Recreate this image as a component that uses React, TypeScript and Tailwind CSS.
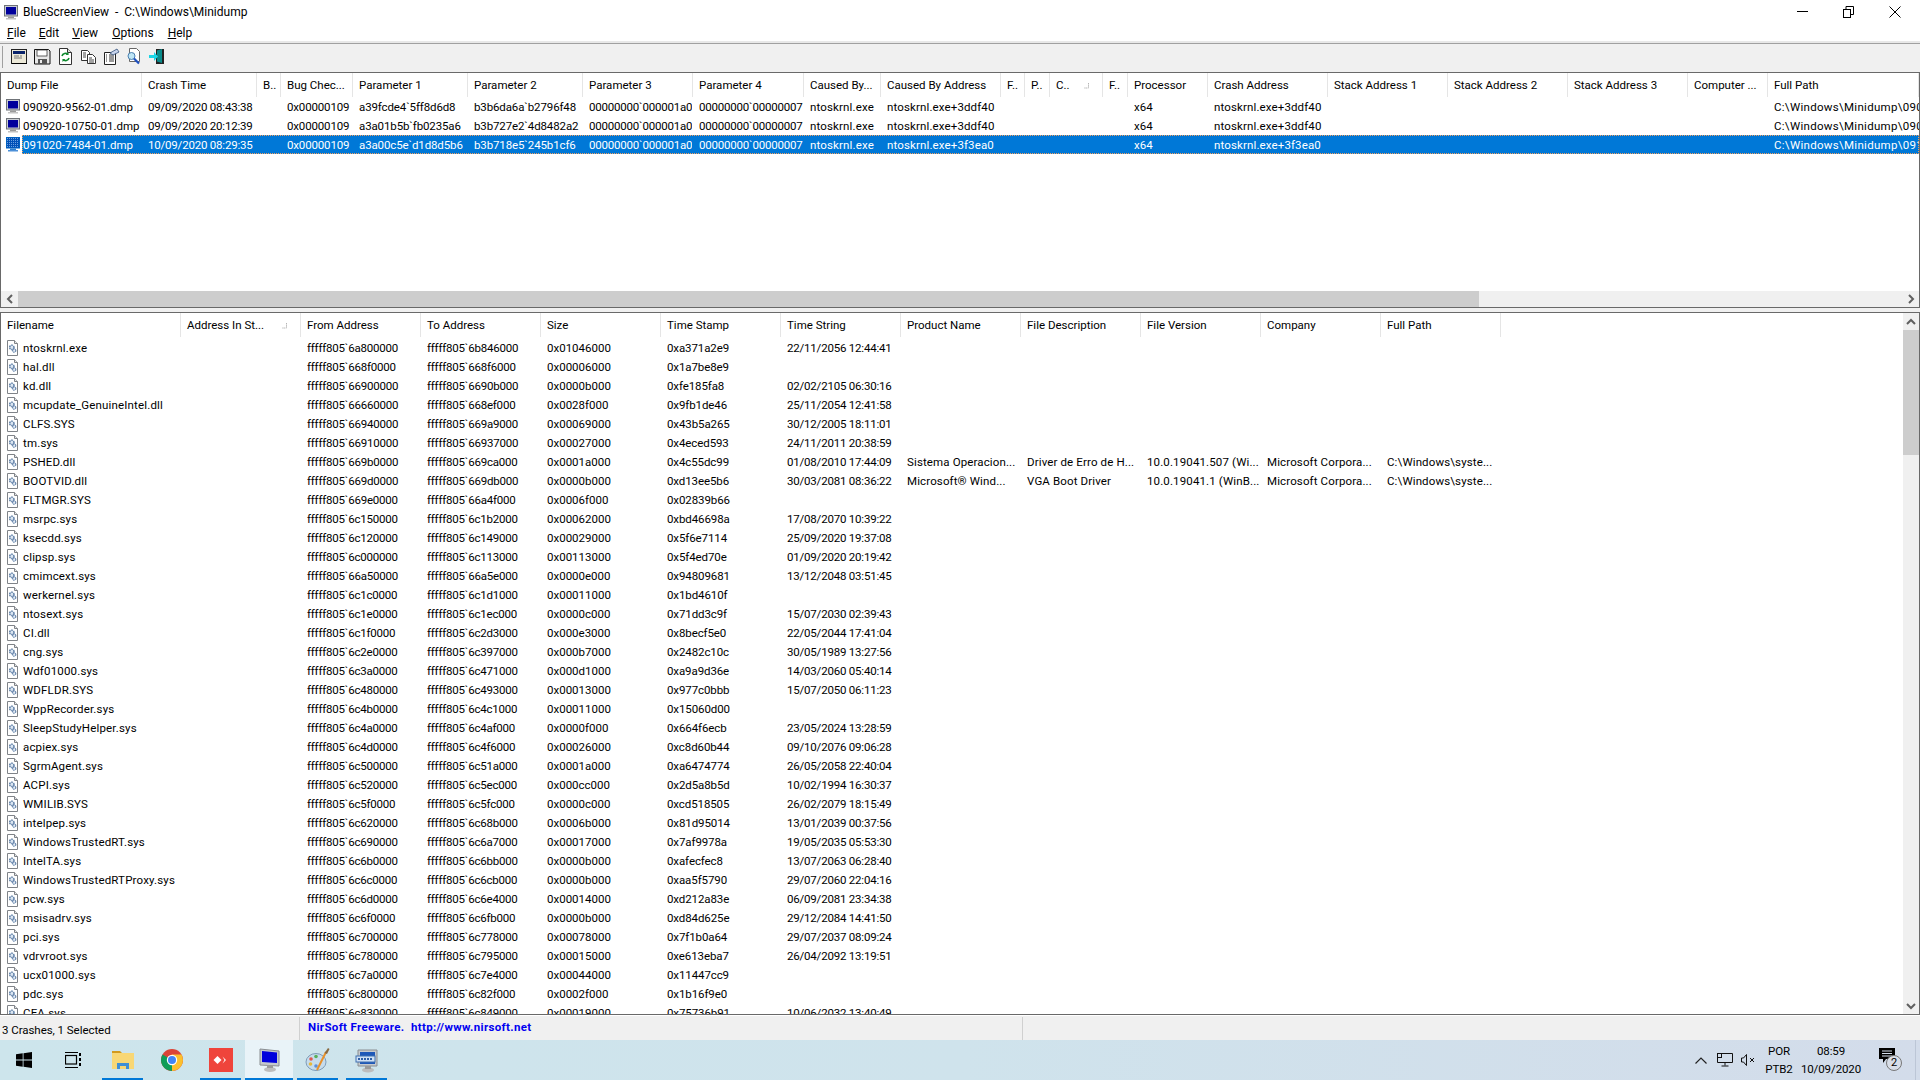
import React from 'react';

const crashes = [
  ['090920-9562-01.dmp', '09/09/2020 08:43:38', '', '0x00000109', 'a39fcde4`5ff8d6d8', 'b3b6da6a`b2796f48', '00000000`000001a0', '00000000`00000007', 'ntoskrnl.exe', 'ntoskrnl.exe+3ddf40', '', '', '', '', 'x64', 'ntoskrnl.exe+3ddf40', '', '', '', '', 'C:\\Windows\\Minidump\\090920-9562-01.dmp'],
  ['090920-10750-01.dmp', '09/09/2020 20:12:39', '', '0x00000109', 'a3a01b5b`fb0235a6', 'b3b727e2`4d8482a2', '00000000`000001a0', '00000000`00000007', 'ntoskrnl.exe', 'ntoskrnl.exe+3ddf40', '', '', '', '', 'x64', 'ntoskrnl.exe+3ddf40', '', '', '', '', 'C:\\Windows\\Minidump\\090920-10750-01.dmp'],
  ['091020-7484-01.dmp', '10/09/2020 08:29:35', '', '0x00000109', 'a3a00c5e`d1d8d5b6', 'b3b718e5`245b1cf6', '00000000`000001a0', '00000000`00000007', 'ntoskrnl.exe', 'ntoskrnl.exe+3f3ea0', '', '', '', '', 'x64', 'ntoskrnl.exe+3f3ea0', '', '', '', '', 'C:\\Windows\\Minidump\\091020-7484-01.dmp'],
];

// the reference font has narrower digits and wider letters than Roboto
const crashTracking = ['', 'tracking-[-0.2px]', '', 'tracking-[-0.15px]', 'tracking-[-0.12px]', 'tracking-[-0.12px]', 'tracking-[-0.2px]', 'tracking-[-0.2px]', 'tracking-[0.15px]', 'tracking-[0.13px]', '', '', '', '', '', 'tracking-[0.13px]', '', '', '', '', 'tracking-[0.3px]'];

const crashHeaders = ['Dump File', 'Crash Time', 'B..', 'Bug Chec...', 'Parameter 1', 'Parameter 2', 'Parameter 3', 'Parameter 4', 'Caused By...', 'Caused By Address', 'F..', 'P..', 'C..', 'F..', 'Processor', 'Crash Address', 'Stack Address 1', 'Stack Address 2', 'Stack Address 3', 'Computer ...', 'Full Path'];

const driverHeaders = ['Filename', 'Address In St...', 'From Address', 'To Address', 'Size', 'Time Stamp', 'Time String', 'Product Name', 'File Description', 'File Version', 'Company', 'Full Path'];

const sis = ['Sistema Operacion...', 'Driver de Erro de H...', '10.0.19041.507 (Wi...', 'Microsoft Corpora...', 'C:\\Windows\\syste...'];
const vga = ['Microsoft\u00ae Wind...', 'VGA Boot Driver', '10.0.19041.1 (WinB...', 'Microsoft Corpora...', 'C:\\Windows\\syste...'];

const drivers: string[][] = [
  ['ntoskrnl.exe', '6a800000', '6b846000', '01046000', '0xa371a2e9', '22/11/2056 12:44:41'],
  ['hal.dll', '668f0000', '668f6000', '00006000', '0x1a7be8e9', ''],
  ['kd.dll', '66900000', '6690b000', '0000b000', '0xfe185fa8', '02/02/2105 06:30:16'],
  ['mcupdate_GenuineIntel.dll', '66660000', '668ef000', '0028f000', '0x9fb1de46', '25/11/2054 12:41:58'],
  ['CLFS.SYS', '66940000', '669a9000', '00069000', '0x43b5a265', '30/12/2005 18:11:01'],
  ['tm.sys', '66910000', '66937000', '00027000', '0x4eced593', '24/11/2011 20:38:59'],
  ['PSHED.dll', '669b0000', '669ca000', '0001a000', '0x4c55dc99', '01/08/2010 17:44:09', ...sis],
  ['BOOTVID.dll', '669d0000', '669db000', '0000b000', '0xd13ee5b6', '30/03/2081 08:36:22', ...vga],
  ['FLTMGR.SYS', '669e0000', '66a4f000', '0006f000', '0x02839b66', ''],
  ['msrpc.sys', '6c150000', '6c1b2000', '00062000', '0xbd46698a', '17/08/2070 10:39:22'],
  ['ksecdd.sys', '6c120000', '6c149000', '00029000', '0x5f6e7114', '25/09/2020 19:37:08'],
  ['clipsp.sys', '6c000000', '6c113000', '00113000', '0x5f4ed70e', '01/09/2020 20:19:42'],
  ['cmimcext.sys', '66a50000', '66a5e000', '0000e000', '0x94809681', '13/12/2048 03:51:45'],
  ['werkernel.sys', '6c1c0000', '6c1d1000', '00011000', '0x1bd4610f', ''],
  ['ntosext.sys', '6c1e0000', '6c1ec000', '0000c000', '0x71dd3c9f', '15/07/2030 02:39:43'],
  ['CI.dll', '6c1f0000', '6c2d3000', '000e3000', '0x8becf5e0', '22/05/2044 17:41:04'],
  ['cng.sys', '6c2e0000', '6c397000', '000b7000', '0x2482c10c', '30/05/1989 13:27:56'],
  ['Wdf01000.sys', '6c3a0000', '6c471000', '000d1000', '0xa9a9d36e', '14/03/2060 05:40:14'],
  ['WDFLDR.SYS', '6c480000', '6c493000', '00013000', '0x977c0bbb', '15/07/2050 06:11:23'],
  ['WppRecorder.sys', '6c4b0000', '6c4c1000', '00011000', '0x15060d00', ''],
  ['SleepStudyHelper.sys', '6c4a0000', '6c4af000', '0000f000', '0x664f6ecb', '23/05/2024 13:28:59'],
  ['acpiex.sys', '6c4d0000', '6c4f6000', '00026000', '0xc8d60b44', '09/10/2076 09:06:28'],
  ['SgrmAgent.sys', '6c500000', '6c51a000', '0001a000', '0xa6474774', '26/05/2058 22:40:04'],
  ['ACPI.sys', '6c520000', '6c5ec000', '000cc000', '0x2d5a8b5d', '10/02/1994 16:30:37'],
  ['WMILIB.SYS', '6c5f0000', '6c5fc000', '0000c000', '0xcd518505', '26/02/2079 18:15:49'],
  ['intelpep.sys', '6c620000', '6c68b000', '0006b000', '0x81d95014', '13/01/2039 00:37:56'],
  ['WindowsTrustedRT.sys', '6c690000', '6c6a7000', '00017000', '0x7af9978a', '19/05/2035 05:53:30'],
  ['IntelTA.sys', '6c6b0000', '6c6bb000', '0000b000', '0xafecfec8', '13/07/2063 06:28:40'],
  ['WindowsTrustedRTProxy.sys', '6c6c0000', '6c6cb000', '0000b000', '0xaa5f5790', '29/07/2060 22:04:16'],
  ['pcw.sys', '6c6d0000', '6c6e4000', '00014000', '0xd212a83e', '06/09/2081 23:34:38'],
  ['msisadrv.sys', '6c6f0000', '6c6fb000', '0000b000', '0xd84d625e', '29/12/2084 14:41:50'],
  ['pci.sys', '6c700000', '6c778000', '00078000', '0x7f1b0a64', '29/07/2037 08:09:24'],
  ['vdrvroot.sys', '6c780000', '6c795000', '00015000', '0xe613eba7', '26/04/2092 13:19:51'],
  ['ucx01000.sys', '6c7a0000', '6c7e4000', '00044000', '0x11447cc9', ''],
  ['pdc.sys', '6c800000', '6c82f000', '0002f000', '0x1b16f9e0', ''],
  ['CEA.sys', '6c830000', '6c849000', '00019000', '0x75736b91', '10/06/2032 13:40:49'],
];

const crashHeadGrid = 'grid-cols-[141px_115px_24px_72px_115px_115px_110px_111px_77px_120px_24px_25px_53px_25px_80px_120px_120px_120px_120px_80px_1fr]';
const crashRowGrid = 'grid-cols-[119px_115px_24px_72px_115px_115px_110px_111px_77px_120px_24px_25px_53px_25px_80px_120px_120px_120px_120px_80px_1fr]';
const driverHeadGrid = 'grid-cols-[180px_120px_120px_120px_120px_120px_120px_120px_120px_120px_120px_120px]';
const driverRowGrid = 'grid-cols-[158px_120px_120px_120px_120px_120px_120px_120px_120px_120px_120px_120px]';

function MonitorIcon({ selected = false }: { selected?: boolean }) {
  return (
    <svg width="16" height="16" viewBox="0 0 16 16" className="shrink-0">
      <defs>
        <pattern id="sel" width="2" height="2" patternUnits="userSpaceOnUse">
          <rect width="2" height="2" fill="#0050b8" />
          <rect width="1" height="1" fill="#6aa0e0" />
        </pattern>
      </defs>
      <rect x="1.5" y="1.5" width="13" height="10.5" fill={selected ? 'url(#sel)' : '#c9cdd2'} stroke={selected ? '#0060c0' : '#6f7378'} />
      <rect x="3" y="3" width="10" height="7.5" fill={selected ? 'url(#sel)' : '#00009c'} />
      <rect x="5" y="12.5" width="6" height="1.5" fill={selected ? '#3080d0' : '#9a9a9a'} />
      <rect x="3" y="14" width="10" height="1.5" fill={selected ? '#4c90d8' : '#c2c2c2'} />
    </svg>
  );
}

function FileIcon() {
  return (
    <svg width="16" height="16" viewBox="0 0 16 16" className="shrink-0">
      <path d="M2.5 .5h7l3 3v12h-10z" fill="#fff" stroke="#7f8388" />
      <path d="M9.5 .5v3h3" fill="#e4e6e8" stroke="#7f8388" />
      <circle cx="6.8" cy="7.4" r="2.2" fill="#dbe6f2" stroke="#5f7fa6" strokeWidth="1.5" strokeDasharray="1.5 .7" />
      <circle cx="9.2" cy="10.6" r="1.6" fill="#e6edf5" stroke="#6c8ab0" strokeWidth="1.3" strokeDasharray="1.3 .6" />
    </svg>
  );
}

function SortGlyph() {
  return (
    <svg width="7" height="7" viewBox="0 0 7 7" className="absolute right-[12px] top-[9px]">
      <path d="M5.5 1v5H1" fill="none" stroke="#b4b4b4" strokeDasharray="1.5 .7" />
    </svg>
  );
}

function HeaderCell({ text, sorted }: { text: string; sorted?: boolean }) {
  return (
    <div className="relative h-[24px] overflow-hidden whitespace-nowrap border-r border-[#e5e5e5] pl-[6px] leading-[24px]">
      {text}
      {sorted && <SortGlyph />}
    </div>
  );
}

function Cell({ text, className = '' }: { text?: string; className?: string }) {
  return <div className={`overflow-hidden whitespace-nowrap pl-[7px] leading-[21px] ${className}`}>{text}</div>;
}

function Arrow({ dir }: { dir: 'left' | 'right' | 'up' | 'down' }) {
  const d = {
    left: 'M7 1 3 5l4 4',
    right: 'M3 1l4 4-4 4',
    up: 'M1 7l4-4 4 4',
    down: 'M1 3l4 4 4-4',
  }[dir];
  return (
    <svg width="10" height="10" viewBox="0 0 10 10">
      <path d={d} fill="none" stroke="#606060" strokeWidth="2" />
    </svg>
  );
}

function Toolbar() {
  return (
    <div className="flex h-[28px] items-center bg-[#f0f0f0] pb-[2px] pl-[2px]">
      <div className="mr-[8px] h-[22px] w-[1px] bg-[#a0a0a0]" />
      <div className="flex gap-[6px]">
        <svg width="17" height="17" viewBox="0 0 17 17">
          <rect x=".5" y="1.5" width="15" height="14" fill="#ece9d8" stroke="#222" />
          <rect x="2" y="3" width="12" height="3" fill="#0a246a" />
          <path d="M3 8h5M3 10h8M9 8h2" stroke="#777" />
          <path d="M1 15.5h15" stroke="#000" />
        </svg>
        <svg width="17" height="17" viewBox="0 0 17 17">
          <path d="M.5 1.5h14l1.500 1.500v13h-15.500z" fill="#e8e8e8" stroke="#111" />
          <rect x="3" y="2" width="10" height="6" fill="#fff" stroke="#222" strokeWidth=".7" />
          <rect x="4" y="11" width="9" height="5" fill="#555" />
          <rect x="6" y="12" width="2" height="3" fill="#eee" />
        </svg>
        <svg width="17" height="17" viewBox="0 0 17 17">
          <path d="M2.500 .5h8l4 4v12h-12z" fill="#fff" stroke="#333" />
          <path d="M10.500 .5v4h4" fill="#ddd" stroke="#333" />
          <path d="M5 8a3.500 3.500 0 0 1 6-1.500M12 10a3.500 3.500 0 0 1-6 1.500" fill="none" stroke="#108a30" strokeWidth="1.600" />
          <path d="M11.500 4v3h-3zM5.500 14v-3h3z" fill="#108a30" />
        </svg>
        <svg width="17" height="17" viewBox="0 0 17 17">
          <path d="M1.500 2.500h6l2 2v8h-8z" fill="#fff" stroke="#333" />
          <path d="M7.500 6.500h5l3 3v6h-8z" fill="#fff" stroke="#333" />
          <path d="M3 5h3M3 7h3M3 9h3M9 10h3M9 12h5M9 14h5" stroke="#444" />
        </svg>
        <svg width="17" height="17" viewBox="0 0 17 17">
          <path d="M1.500 4.500h11v12h-11z" fill="#fff" stroke="#222" />
          <path d="M3 7h1M3 9h1M3 11h1M3 13h1M6 7h5M6 9h5M6 11h5M6 13h5" stroke="#333" />
          <path d="M7 5 14 1l2 3-6 3z" fill="#c8d4ec" stroke="#33507a" strokeWidth=".8" />
        </svg>
        <svg width="17" height="17" viewBox="0 0 17 17">
          <path d="M3.500 .5h7l3 3v10h-10z" fill="#fff" stroke="#666" />
          <circle cx="5.500" cy="8" r="3.500" fill="#bfe6f6" stroke="#4a7fb0" />
          <path d="M8 10.500l5 5" stroke="#1f50c0" strokeWidth="2.200" />
        </svg>
        <svg width="17" height="17" viewBox="0 0 17 17">
          <path d="M7 1h8v15H7z" fill="#222" />
          <path d="M8 2.500 13 1v14l-5-1.500z" fill="#0a8c8c" />
          <path d="M0 7h5V4l4 4.500L5 13v-3H0z" fill="#19d6e6" />
        </svg>
      </div>
    </div>
  );
}

function TaskButton({ children, open, active, className = 'w-[49px]' }: { children: React.ReactNode; open?: boolean; active?: boolean; className?: string }) {
  return (
    <div className={`relative flex h-[40px] items-center justify-center ${className} ${active ? 'bg-[#e9f3f8]' : ''}`}>
      {children}
      {open && <div className={`absolute bottom-0 h-[2px] bg-[#0078d7] ${active ? 'inset-x-0' : 'inset-x-[4px]'}`} />}
    </div>
  );
}

function Taskbar() {
  return (
    <div className="flex h-[40px] items-center bg-[linear-gradient(90deg,#cde5ec_0%,#cfe3ec_50%,#d3dcea_100%)]">
      <TaskButton className="w-[48px]">
        <svg width="16" height="16" viewBox="0 0 16 16" fill="#000">
          <path d="M0 2.200 6.700 1.300v6.300H0zM7.500 1.200 16 0v7.600H7.500zM0 8.400h6.700v6.300L0 13.800zM7.500 8.400H16V16l-8.500-1.200z" />
        </svg>
      </TaskButton>
      <TaskButton className="w-[50px]">
        <svg width="16" height="16" viewBox="0 0 16 16" fill="none" stroke="#000">
          <path d="M0 .5h13M0 15.500h13" />
          <rect x=".5" y="3.500" width="11" height="8.500" strokeWidth="1.200" />
          <path d="M15 1v3M15 6v3M15 11v3" strokeWidth="2" />
        </svg>
      </TaskButton>
      <TaskButton open>
        <svg width="24" height="24" viewBox="0 0 24 24">
          <path d="M1 3h8l2 2H1z" fill="#d29a1e" />
          <rect x="1" y="5" width="22" height="16" fill="#f8d775" />
          <path d="M6 15h12v6h-3v-3H9v3H6z" fill="#3f8fd6" />
        </svg>
      </TaskButton>
      <TaskButton>
        <svg width="24" height="24" viewBox="0 0 24 24">
          <circle cx="12" cy="12" r="11" fill="#db4437" />
          <path d="M12 12 2.500 6.500A11 11 0 0 0 12 23z" fill="#0f9d58" />
          <path d="M12 12 12 23A11 11 0 0 0 21.500 6.500H12z" fill="#fbc02d" />
          <circle cx="12" cy="12" r="5.200" fill="#fff" />
          <circle cx="12" cy="12" r="4" fill="#4285f4" />
        </svg>
      </TaskButton>
      <TaskButton open>
        <div className="flex h-[24px] w-[24px] items-center justify-center bg-[#ef443b]">
          <svg width="16" height="10" viewBox="0 0 16 10" fill="#fff">
            <path d="M4.500 1l4 4-4 4-4-4zM9.500 1.500 13 5 9.500 8.500 11.500 5z" />
          </svg>
        </div>
      </TaskButton>
      <TaskButton open active className="w-[48px]">
        <svg width="24" height="26" viewBox="0 0 24 26">
          <path d="M3 2 22 4v15L3 18z" fill="#c4c8cc" stroke="#8a8e92" />
          <path d="M5 4l15 1.500V16L5 15z" fill="#0000dc" />
          <ellipse cx="13" cy="22.500" rx="6" ry="2.500" fill="#bdbdbd" />
          <rect x="10" y="18" width="6" height="3" fill="#9a9a9a" />
        </svg>
      </TaskButton>
      <TaskButton open>
        <svg width="26" height="26" viewBox="0 0 26 26">
          <ellipse cx="11" cy="15" rx="10" ry="8.500" fill="#c6dcec" stroke="#7f9cb8" />
          <circle cx="6" cy="12" r="1.800" fill="#e2574c" />
          <circle cx="11" cy="9.500" r="1.800" fill="#58b05a" />
          <circle cx="5.500" cy="17" r="1.800" fill="#e8b93a" />
          <circle cx="11" cy="19" r="1.800" fill="#5e8fd8" />
          <path d="M12 23 21 5" stroke="#e8912a" strokeWidth="2" />
          <path d="M19.500 6 23 1l1.500 1-2.500 5z" fill="#8a6a40" />
        </svg>
      </TaskButton>
      <TaskButton open>
        <svg width="26" height="26" viewBox="0 0 26 26">
          <path d="M4 3h19v16H4z" fill="#c6cace" stroke="#8a8e92" />
          <path d="M6 5h15v12H6z" fill="#1f58b8" />
          <rect x="2" y="9" width="19" height="6" fill="#cfe0f4" stroke="#4070b0" />
          <path d="M4 12h15" stroke="#2f5fa8" strokeWidth="2" strokeDasharray="2 1" />
          <ellipse cx="14" cy="23" rx="6" ry="2.500" fill="#bdbdbd" />
          <rect x="11" y="19" width="6" height="3" fill="#9a9a9a" />
        </svg>
      </TaskButton>

      <div className="ml-auto flex h-[40px] items-center">
        <svg width="12" height="7" viewBox="0 0 12 7" className="mr-[10px]">
          <path d="M.5 6.500 6 1l5.500 5.500" fill="none" stroke="#222" strokeWidth="1.200" />
        </svg>
        <svg width="16" height="14" viewBox="0 0 16 14" fill="none" stroke="#111" className="mr-[8px]">
          <path d="M5 .5h10.500v9H.5V5" />
          <rect x=".5" y=".5" width="4" height="4" />
          <path d="M8 9.500v3M4.500 13h7" />
        </svg>
        <svg width="14" height="12" viewBox="0 0 14 12" fill="none" stroke="#111" className="mr-[9px]">
          <path d="M.5 4v4h2l3 3.500V.5l-3 3.500z" />
          <path d="M9 4l4 4M13 4l-4 4" />
        </svg>
        <div className="mr-[6px] flex w-[30px] flex-col items-center text-[11.5px] leading-[18px] tracking-[-0.1px]">
          <span>POR</span>
          <span>PTB2</span>
        </div>
        <div className="mr-[17px] flex w-[62px] flex-col items-center text-[11.5px] leading-[18px] tracking-[-0.1px]">
          <span>08:59</span>
          <span>10/09/2020</span>
        </div>
        <div className="relative mr-[12px] h-[24px] w-[24px]">
          <svg width="16" height="15" viewBox="0 0 16 15" fill="#000">
            <path d="M0 0h16v11H7l-3 4v-4H0z" />
            <path d="M3 3h10M3 5.500h10M3 8h10" stroke="#d3dcea" />
          </svg>
          <div className="absolute left-[7px] top-[7px] flex h-[16px] w-[16px] items-center justify-center rounded-full border border-[#777] bg-[#d8dee8] text-[11px]">2</div>
        </div>
        <div className="mr-[4px] h-[40px] w-[1px] bg-[#bcc6d6]" />
      </div>
    </div>
  );
}

export default function App() {
  return (
    <div className="flex h-screen w-[1920px] flex-col overflow-hidden bg-white text-[11.5px] text-black [font-family:Roboto,sans-serif]">
      {/* Title bar */}
      <div className="flex h-[22px] items-center pt-[2px]">
        <div className="ml-[3px] mr-[4px]">
          <MonitorIcon />
        </div>
        <span className="whitespace-pre text-[12px]">BlueScreenView  -  C:\Windows\Minidump</span>
        <div className="ml-auto flex items-center">
          <svg width="11" height="11" viewBox="0 0 11 11" className="mr-[35px]">
            <path d="M0 5.500h11" stroke="#000" />
          </svg>
          <svg width="11" height="12" viewBox="0 0 11 12" fill="none" stroke="#000" className="mr-[35px]">
            <rect x=".5" y="3.500" width="7" height="8" />
            <path d="M3 3.500V.5h7.500v8H7.500" />
          </svg>
          <svg width="12" height="12" viewBox="0 0 12 12" fill="none" stroke="#000" className="mr-[19px]">
            <path d="M.5.500l11 11M11.500.5l-11 11" />
          </svg>
        </div>
      </div>

      {/* Menu */}
      <div className="flex h-[19px] items-center gap-[13px] pl-[7px] pt-[4px] text-[12px]">
        <span><span className="underline">F</span>ile</span>
        <span><span className="underline">E</span>dit</span>
        <span><span className="underline">V</span>iew</span>
        <span className="ml-[1px]"><span className="underline">O</span>ptions</span>
        <span className="ml-[1px]"><span className="underline">H</span>elp</span>
      </div>
      <div className="h-[3px] border-b border-[#a0a0a0] bg-[#e8e8e8]" />

      <Toolbar />

      {/* Crash list */}
      <div className="flex h-[237px] flex-col border border-[#696969]">
        <div className={`grid ${crashHeadGrid}`}>
          {crashHeaders.map((h, i) => (
            <HeaderCell key={i} text={h} sorted={h === 'C..'} />
          ))}
        </div>
        <div className="flex-1 overflow-hidden">
          {crashes.map((row, i) => (
            <div key={row[0]} className="flex h-[19px]">
              <div className="flex w-[21px] items-center pl-[4px]">
                <MonitorIcon selected={i === 2} />
              </div>
              <div className={`grid flex-1 ${crashRowGrid} ${i === 2 ? 'bg-[#0078d7] text-white outline-1 -outline-offset-1 outline-dotted outline-[#f0a060]' : ''}`}>
                {row.map((c, j) => (
                  <Cell key={j} text={c} className={`${crashTracking[j]} ${j === 0 ? '!pl-[1px]' : ''}`} />
                ))}
              </div>
            </div>
          ))}
        </div>
        <div className="flex h-[16px] items-center bg-[#f0f0f0]">
          <div className="flex w-[17px] justify-center"><Arrow dir="left" /></div>
          <div className="h-[16px] w-[1461px] bg-[#cdcdcd]" />
          <div className="ml-auto flex w-[17px] justify-center"><Arrow dir="right" /></div>
        </div>
      </div>

      <div className="h-[4px] bg-[#f0f0f0]" />

      {/* Driver list */}
      <div className="flex h-[703px] border border-[#696969]">
        <div className="min-w-0 flex-1 overflow-hidden">
          <div className={`mb-[1px] grid ${driverHeadGrid}`}>
            {driverHeaders.map((h) => (
              <HeaderCell key={h} text={h} sorted={h === 'Address In St...'} />
            ))}
          </div>
          {drivers.map((d) => (
            <div key={d[0]} className="flex h-[19px]">
              <div className="flex w-[21px] items-center pl-[4px]">
                <FileIcon />
              </div>
              <div className={`grid flex-1 ${driverRowGrid}`}>
                <Cell text={d[0]} className="!pl-[1px] tracking-[0.17px]" />
                <Cell />
                <Cell text={`fffff805\`${d[1]}`} className="tracking-[-0.2px]" />
                <Cell text={`fffff805\`${d[2]}`} className="tracking-[-0.2px]" />
                <Cell text={`0x${d[3]}`} />
                <Cell text={d[4]} className="tracking-[-0.1px]" />
                <Cell text={d[5]} className="tracking-[-0.2px]" />
                {[6, 7, 8, 9, 10].map((k) => (
                  <Cell key={k} text={d[k]} className="tracking-[0.13px]" />
                ))}
              </div>
            </div>
          ))}
        </div>
        <div className="flex w-[16px] flex-col bg-[#f0f0f0]">
          <div className="flex h-[17px] items-center justify-center"><Arrow dir="up" /></div>
          <div className="h-[125px] bg-[#cdcdcd]" />
          <div className="mt-auto flex h-[17px] items-center justify-center"><Arrow dir="down" /></div>
        </div>
      </div>

      {/* Status bar */}
      <div className="mt-[1px] flex h-[24px] bg-[#f0f0f0] pt-[1px]">
        <div className="flex w-[300px] items-end whitespace-nowrap border-r border-[#d0d0d0] pb-[1px] pl-[2px] tracking-[-0.05px]">3 Crashes, 1 Selected</div>
        <div className="w-[723px] whitespace-nowrap border-r border-[#d0d0d0] pl-[8px] pt-[1px] font-bold leading-[18px] tracking-[0.34px] text-[#0000f0]">NirSoft Freeware.&nbsp; http://www.nirsoft.net</div>
      </div>

      <Taskbar />
    </div>
  );
}
